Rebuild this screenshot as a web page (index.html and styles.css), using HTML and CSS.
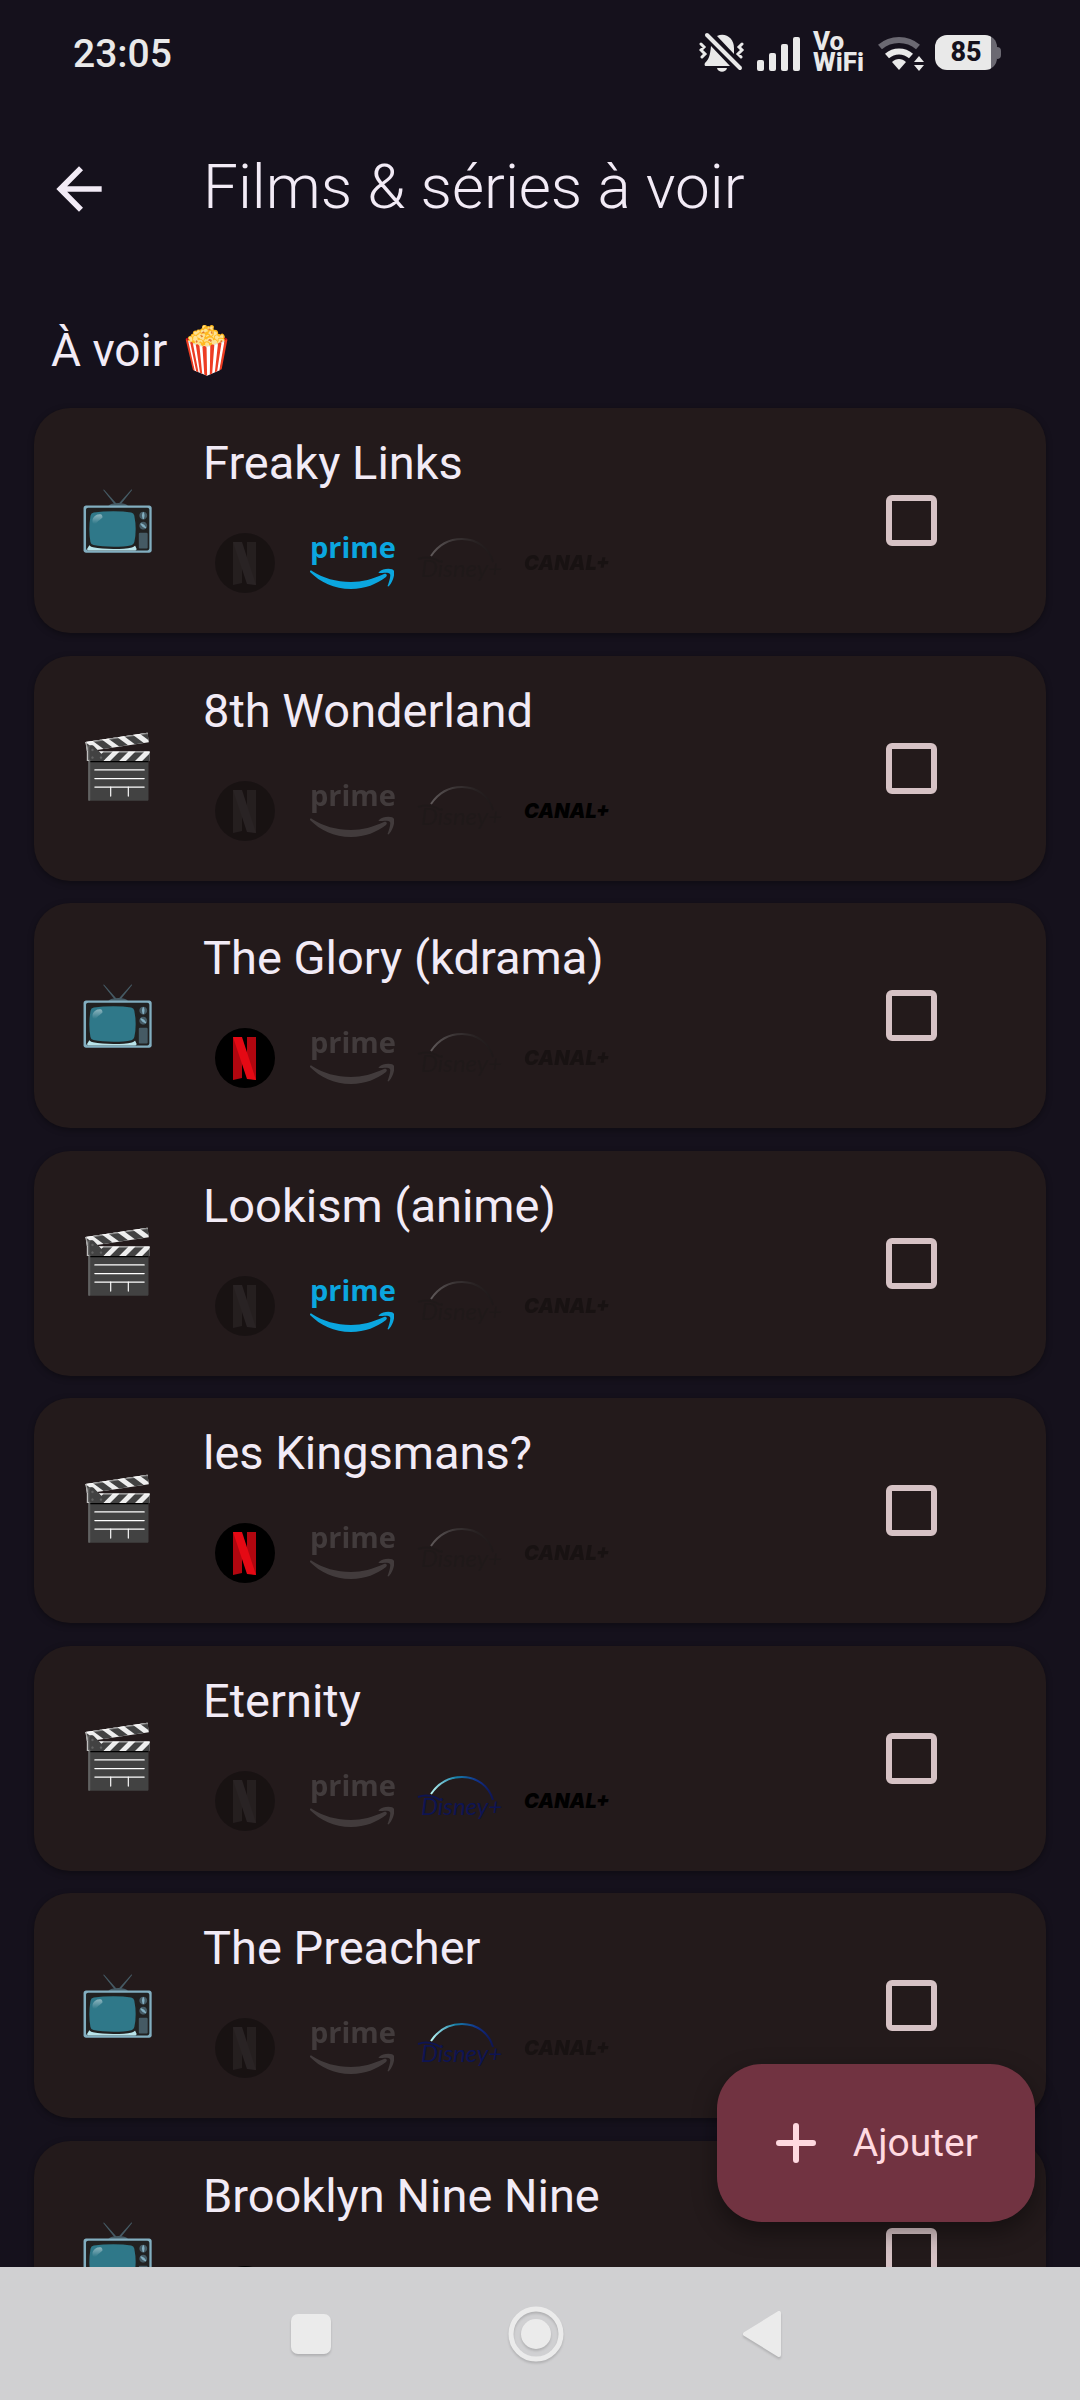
FILE: index.html
```html
<!DOCTYPE html>
<html lang="fr">
<head>
<meta charset="utf-8">
<meta name="viewport" content="width=device-width, initial-scale=1">
<title>Films &amp; séries à voir</title>
<link rel="stylesheet" href="styles.css">
</head>
<body>
<svg class="defs" aria-hidden="true">
  <defs>
    <linearGradient id="arc-fill" x1="0" y1="0" x2="1" y2="0">
      <stop offset="0" stop-color="#b8f4f2"/>
      <stop offset=".4" stop-color="#1780a8"/>
      <stop offset=".75" stop-color="#10308a"/>
      <stop offset="1" stop-color="#0e1452"/>
    </linearGradient>
    <symbol id="netflix" viewBox="0 0 84 60">
      <circle cx="42" cy="30" r="30" fill="#000"/>
      <path d="M30 9h9v41l-9 2zM44 9h9v43l-9-2z" fill="#b1060f"/>
      <path d="M30 9h9l14 43-9-1z" fill="#e50914"/>
    </symbol>
    <symbol id="prime" viewBox="0 0 84 60">
      <path d="M0 39c10 10 24 17 41 17 14 0 26-5 35-12 2-2 0-4-2-3-11 5-22 8-33 8-15 0-28-4-39-11-1-1-3 0-2 1z"/>
      <path d="M69 39c4-4 14-4 15-1 1 3-1 11-5 15-1 1-2 0-1-1 1-3 3-9 2-11s-7-1-10-1c-1 0-2 0-1-1z"/>
    </symbol>
    <symbol id="disney" viewBox="0 0 84 60">
      <path d="M14 23C22 11 33 6 45 6c15 0 27 9 31 23" fill="none" stroke="url(#arc-fill)" stroke-width="2"/>
      <path d="M1 26c8-3 17-1 22 3" fill="none" stroke="#0e1452" stroke-width="2"/>
    </symbol>
  </defs>
</svg>

<div class="screen">
  <div class="status">
    <time class="clock">23:05</time>
    <div class="status-icons">
      <svg width="46" height="40" viewBox="0 0 46 40" fill="#e9e9e9">
        <path d="M18 4c9-4 17 3 17 12v6z"/>
        <path d="M12 14c-1 10-2 13-6 17-1 2 0 3 1 3h24zM18 36h10c-1 5-9 5-10 0z"/>
        <path d="M8 3l33 33" stroke="#e9e9e9" stroke-width="4" stroke-linecap="round"/>
        <path d="M2 12l3 3-3 3 4 4-3 3M43 12l-3 3 3 3-4 4 3 3" fill="none" stroke="#e9e9e9" stroke-width="3" stroke-linecap="round"/>
      </svg>
      <svg class="signal" width="44" height="40" viewBox="0 0 44 40" fill="#e9e9e9">
        <rect y="28" width="7" height="11" rx="2"/><rect x="12" y="21" width="7" height="18" rx="2"/><rect x="24" y="12" width="7" height="27" rx="2"/><rect x="36" y="5" width="7" height="34" rx="2"/>
      </svg>
      <span class="vowifi">Vo<br>WiFi</span>
      <svg width="48" height="40" viewBox="0 0 48 40">
        <path d="M3 15a29 29 0 0 1 38 0" fill="none" stroke="#6b6972" stroke-width="6"/>
        <path d="M10 24a18 18 0 0 1 24 0" fill="none" stroke="#e9e9e9" stroke-width="6"/>
        <path d="M15 30c4-4 10-4 14 0l-7 8zM42 24l5 6H37zM42 39l5-6H37z" fill="#e9e9e9"/>
      </svg>
      <span class="battery">85</span>
    </div>
  </div>

  <header class="appbar">
    <button class="back" aria-label="Retour">
      <svg width="68" height="68" viewBox="0 0 24 24" fill="currentColor"><path d="M20 11H7.830l5.590-5.590L12 4l-8 8 8 8 1.410-1.410L7.830 13H20z"/></svg>
    </button>
    <h1>Films &amp; séries à voir</h1>
  </header>

  <main class="content">
    <h2>À voir 🍿</h2>
    <ul class="list">
      <li class="card">
        <span class="kind">📺</span>
        <div class="info">
          <label for="m1">Freaky Links</label>
          <div class="services">
            <svg class="logo off"><use href="#netflix"/></svg>
            <svg class="logo prime"><use href="#prime"/><text y="25">prime</text></svg>
            <svg class="logo disney off"><use href="#disney"/><text x="4" y="44">Disney+</text></svg>
            <svg class="logo canal off"><text y="37">CANAL+</text></svg>
          </div>
        </div>
        <input type="checkbox" id="m1">
      </li>
      <li class="card">
        <span class="kind">🎬</span>
        <div class="info">
          <label for="m2">8th Wonderland</label>
          <div class="services">
            <svg class="logo off"><use href="#netflix"/></svg>
            <svg class="logo prime off"><use href="#prime"/><text y="25">prime</text></svg>
            <svg class="logo disney off"><use href="#disney"/><text x="4" y="44">Disney+</text></svg>
            <svg class="logo canal"><text y="37">CANAL+</text></svg>
          </div>
        </div>
        <input type="checkbox" id="m2">
      </li>
      <li class="card">
        <span class="kind">📺</span>
        <div class="info">
          <label for="m3">The Glory (kdrama)</label>
          <div class="services">
            <svg class="logo"><use href="#netflix"/></svg>
            <svg class="logo prime off"><use href="#prime"/><text y="25">prime</text></svg>
            <svg class="logo disney off"><use href="#disney"/><text x="4" y="44">Disney+</text></svg>
            <svg class="logo canal off"><text y="37">CANAL+</text></svg>
          </div>
        </div>
        <input type="checkbox" id="m3">
      </li>
      <li class="card">
        <span class="kind">🎬</span>
        <div class="info">
          <label for="m4">Lookism (anime)</label>
          <div class="services">
            <svg class="logo off"><use href="#netflix"/></svg>
            <svg class="logo prime"><use href="#prime"/><text y="25">prime</text></svg>
            <svg class="logo disney off"><use href="#disney"/><text x="4" y="44">Disney+</text></svg>
            <svg class="logo canal off"><text y="37">CANAL+</text></svg>
          </div>
        </div>
        <input type="checkbox" id="m4">
      </li>
      <li class="card">
        <span class="kind">🎬</span>
        <div class="info">
          <label for="m5">les Kingsmans?</label>
          <div class="services">
            <svg class="logo"><use href="#netflix"/></svg>
            <svg class="logo prime off"><use href="#prime"/><text y="25">prime</text></svg>
            <svg class="logo disney off"><use href="#disney"/><text x="4" y="44">Disney+</text></svg>
            <svg class="logo canal off"><text y="37">CANAL+</text></svg>
          </div>
        </div>
        <input type="checkbox" id="m5">
      </li>
      <li class="card">
        <span class="kind">🎬</span>
        <div class="info">
          <label for="m6">Eternity</label>
          <div class="services">
            <svg class="logo off"><use href="#netflix"/></svg>
            <svg class="logo prime off"><use href="#prime"/><text y="25">prime</text></svg>
            <svg class="logo disney"><use href="#disney"/><text x="4" y="44">Disney+</text></svg>
            <svg class="logo canal"><text y="37">CANAL+</text></svg>
          </div>
        </div>
        <input type="checkbox" id="m6">
      </li>
      <li class="card">
        <span class="kind">📺</span>
        <div class="info">
          <label for="m7">The Preacher</label>
          <div class="services">
            <svg class="logo off"><use href="#netflix"/></svg>
            <svg class="logo prime off"><use href="#prime"/><text y="25">prime</text></svg>
            <svg class="logo disney"><use href="#disney"/><text x="4" y="44">Disney+</text></svg>
            <svg class="logo canal off"><text y="37">CANAL+</text></svg>
          </div>
        </div>
        <input type="checkbox" id="m7">
      </li>
      <li class="card">
        <span class="kind">📺</span>
        <div class="info">
          <label for="m8">Brooklyn Nine Nine</label>
          <div class="services">
            <svg class="logo"><use href="#netflix"/></svg>
          </div>
        </div>
        <input type="checkbox" id="m8">
      </li>
    </ul>
    <button class="fab">
      <svg width="40" height="40" viewBox="0 0 40 40" fill="none" stroke="currentColor" stroke-width="6" stroke-linecap="round"><path d="M20 3v34M3 20h34"/></svg>
      Ajouter
    </button>
  </main>

  <nav class="navbar">
    <button aria-label="Applications récentes"><svg width="56" height="56" viewBox="0 0 56 56"><rect x="8" y="8" width="40" height="40" rx="7"/></svg></button>
    <button aria-label="Accueil"><svg width="56" height="56" viewBox="0 0 56 56"><circle cx="28" cy="28" r="25" fill="none" stroke="#ebebeb" stroke-width="5"/><circle cx="28" cy="28" r="15"/></svg></button>
    <button aria-label="Précédent"><svg width="56" height="56" viewBox="0 0 56 56"><path d="M12 28L46 7v42z" stroke="#ebebeb" stroke-width="4" stroke-linejoin="round"/></svg></button>
  </nav>
</div>
</body>
</html>
```
FILE: styles.css
```css
* {
  box-sizing: border-box;
}

body {
  margin: 0;
  background: #15111c;
  color: #f2ebf6;
  font-family: Roboto, "Noto Color Emoji", sans-serif;
}

button {
  padding: 0;
  border: 0;
  background: none;
  color: inherit;
  font: inherit;
}

svg {
  display: block;
}

.defs {
  position: absolute;
  width: 0;
  height: 0;
}

.screen {
  display: flex;
  flex-direction: column;
  height: 100vh;
}

/* System status bar */
.status {
  display: flex;
  flex: none;
  align-items: center;
  justify-content: space-between;
  height: 104px;
  padding: 0 80px 0 73px;
  color: #e9e9e9;
}

.clock {
  padding-top: 4px;
  font-size: 39px;
  font-weight: 500;
}

.status-icons {
  display: flex;
  align-items: center;
}

.signal {
  margin: 0 12px;
}

.vowifi {
  width: 64px;
  font-size: 26px;
  font-weight: 800;
  line-height: 21px;
}

.battery {
  position: relative;
  width: 62px;
  height: 35px;
  margin: 0 3px 0 10px;
  border-radius: 12px;
  background: linear-gradient(90deg, #e9e9e9 56px, #6b6972 56px);
  color: #15111c;
  font-size: 27px;
  font-weight: 800;
  line-height: 35px;
  text-align: center;
}

.battery::after {
  content: "";
  position: absolute;
  top: 12px;
  left: 100%;
  width: 4px;
  height: 12px;
  border-radius: 0 4px 4px 0;
  background: #6b6972;
}

/* App bar */
.appbar {
  display: flex;
  flex: none;
  align-items: center;
  height: 170px;
  padding-left: 45px;
}

.back {
  width: 68px;
  margin-right: 90px;
}

h1 {
  margin: 0;
  padding-bottom: 4px;
  font-size: 62px;
  font-weight: 300;
  line-height: 72px;
}

/* List */
.content {
  position: relative;
  flex: 1;
  min-height: 0;
  overflow: hidden;
}

h2 {
  margin: 0;
  padding: 42px 51px 24px;
  font-size: 46px;
  font-weight: 400;
  line-height: 68px;
}

.list {
  margin: 0;
  padding: 0 34px;
  list-style: none;
}

.card {
  display: flex;
  align-items: center;
  height: 225px;
  margin-bottom: 22px;
  padding: 0 109px 0 45px;
  border-radius: 36px;
  background: #231a1b;
  box-shadow: 0 2px 6px rgba(0, 0, 0, .35);
}

.card:nth-child(odd) {
  margin-bottom: 23px;
}

.kind {
  width: 124px;
  padding-bottom: 4px;
  font-size: 62px;
  line-height: 72px;
}

.info {
  flex: 1;
  height: 225px;
  padding-top: 25px;
}

.info label {
  display: block;
  font-size: 47px;
  line-height: 60px;
}

.services {
  display: flex;
  gap: 23px;
  margin-top: 40px;
}

.logo {
  width: 84px;
  height: 60px;
  overflow: visible;
}

.off {
  filter: grayscale(1);
  opacity: .3;
}

.prime {
  fill: #0ba6df;
  font: 700 29px "Open Sans", sans-serif;
}

.disney {
  fill: #0e1452;
  font: italic 24px Lato, sans-serif;
}

.canal {
  fill: #000;
  font: italic 900 20px Inter, sans-serif;
}

.card input {
  appearance: none;
  width: 51px;
  height: 51px;
  margin: 0;
  border: 6px solid #d6c2c5;
  border-radius: 6px;
}

.fab {
  position: absolute;
  right: 45px;
  bottom: 45px;
  display: flex;
  align-items: center;
  gap: 37px;
  height: 158px;
  padding: 0 57px 0 59px;
  border-radius: 45px;
  background: #713341;
  box-shadow: 0 10px 24px rgba(0, 0, 0, .4);
  color: #ffd9e0;
  font-size: 39px;
  font-weight: 400;
}

/* System navigation */
.navbar {
  display: flex;
  flex: none;
  align-items: center;
  justify-content: center;
  gap: 169px;
  height: 133px;
  padding-right: 9px;
  background: #d0d0d2;
}

.navbar svg {
  fill: #ebebeb;
  filter: drop-shadow(0 2px 1px rgba(0, 0, 0, .15));
}
```
